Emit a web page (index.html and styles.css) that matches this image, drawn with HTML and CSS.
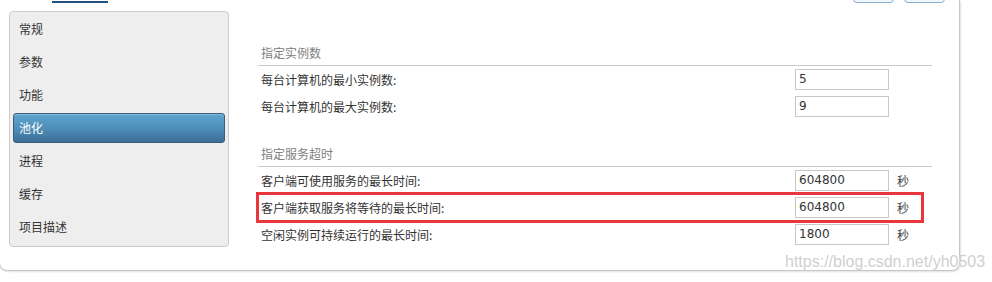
FILE: index.html
```html
<!DOCTYPE html>
<html lang="zh-CN">
<head>
<meta charset="utf-8">
<title>池化</title>
<link rel="stylesheet" href="styles.css">
</head>
<body>
<div class="window">
  <div class="topbar">
    <div class="title"><span class="title-text">服务</span><a class="title-link">服务器名</a></div>
    <div class="buttons">
      <span class="btn">确定</span>
      <span class="btn">取消</span>
    </div>
  </div>
  <div class="main">
    <ul class="sidebar">
      <li class="nav-item">常规</li>
      <li class="nav-item">参数</li>
      <li class="nav-item">功能</li>
      <li class="nav-item active">池化</li>
      <li class="nav-item">进程</li>
      <li class="nav-item">缓存</li>
      <li class="nav-item">项目描述</li>
    </ul>
    <div class="content">
      <div class="section">
        <div class="section-title">指定实例数</div>
        <div class="row"><span class="label">每台计算机的最小实例数:</span><span class="field">5</span><span class="unit"></span></div>
        <div class="row"><span class="label">每台计算机的最大实例数:</span><span class="field">9</span><span class="unit"></span></div>
      </div>
      <div class="section second">
        <div class="section-title">指定服务超时</div>
        <div class="row"><span class="label">客户端可使用服务的最长时间:</span><span class="field">604800</span><span class="unit">秒</span></div>
        <div class="row highlighted"><span class="label">客户端获取服务将等待的最长时间:</span><span class="field">604800</span><span class="unit">秒</span><span class="mark"></span></div>
        <div class="row"><span class="label">空闲实例可持续运行的最长时间:</span><span class="field">1800</span><span class="unit">秒</span></div>
      </div>
    </div>
  </div>
</div>
<div class="watermark">https://blog.csdn.net/yh0503</div>
</body>
</html>
```

FILE: styles.css
```css
html, body {
  margin: 0;
  padding: 0;
  background: #ffffff;
}
body {
  width: 992px;
  height: 282px;
  overflow: hidden;
  position: relative;
  font-family: "Noto Sans CJK SC", "Liberation Sans", sans-serif;
  font-size: 12px;
  color: #333333;
}
.window {
  margin-left: -1px;
  width: 961px;
  height: 271px;
  box-sizing: border-box;
  border: 1px solid #c6c6c6;
  border-top: none;
  border-radius: 0 0 8px 8px;
  box-shadow: 1px 1px 2px rgba(0, 0, 0, 0.12);
  background: #ffffff;
}
.topbar {
  height: 11px;
  display: flex;
  justify-content: space-between;
  align-items: flex-start;
  overflow: hidden;
}
.title {
  margin-top: -19px;
  margin-left: 13px;
  font-size: 14px;
  line-height: 20px;
  color: #555;
  display: flex;
  gap: 11px;
}
.title-link {
  color: #1d4f80;
  border-bottom: 2px solid #1d4f80;
}
.buttons {
  display: flex;
  gap: 10px;
  margin-right: 14px;
  margin-top: -21px;
}
.btn {
  display: block;
  width: 41px;
  height: 24px;
  box-sizing: border-box;
  border: 1px solid #86aed6;
  border-radius: 4px;
  background: #f4f8fc;
  color: transparent;
  font-size: 11px;
}
.main {
  display: flex;
  align-items: flex-start;
}
.sidebar {
  list-style: none;
  margin: 0 0 0 9px;
  padding: 2px 3px 0 3px;
  width: 220px;
  height: 236px;
  box-sizing: border-box;
  border: 1px solid #cccccc;
  border-radius: 4px;
  background: #eeeeee;
  display: flex;
  flex-direction: column;
  gap: 3px;
}
.nav-item {
  height: 30px;
  flex: none;
  padding-left: 6px;
  line-height: 30px;
  box-sizing: border-box;
  color: #333333;
  font-size: 12px;
}
.nav-item.active {
  color: #ffffff;
  border: 1px solid #3d5f7c;
  border-radius: 3px;
  line-height: 28px;
  padding-left: 5px;
  background: linear-gradient(to bottom, #60a5cf 0%, #4f8fb9 50%, #3c6f95 100%);
  box-shadow: inset 0 1px 0 rgba(255, 255, 255, 0.25);
}
.content {
  margin-left: 29px;
  width: 674px;
  padding-top: 33px;
}
.section.second {
  margin-top: 25px;
}
.section-title {
  height: 18px;
  line-height: 18px;
  padding: 0 0 3px 3px;
  border-bottom: 1px solid #cccccc;
  color: #808080;
  font-size: 12px;
}
.row {
  position: relative;
  display: grid;
  grid-template-columns: 537px 94px auto;
  align-items: center;
  height: 27px;
  padding-bottom: 1px;
  box-sizing: border-box;
}
.label {
  padding-left: 3px;
  color: #333333;
}
.field {
  display: block;
  height: 21px;
  box-sizing: border-box;
  border: 1px solid #c8c8c8;
  padding-left: 3px;
  line-height: 19px;
  font-family: "DejaVu Sans", "Liberation Sans", sans-serif;
  font-size: 12px;
  color: #333333;
  background: #ffffff;
}
.unit {
  padding-left: 8px;
  color: #444444;
}
.mark {
  position: absolute;
  left: -2px;
  right: 8px;
  top: -2px;
  bottom: -2px;
  border: 3px solid #e8373d;
  pointer-events: none;
}
.watermark {
  position: absolute;
  left: 785px;
  top: 252px;
  font-family: "Liberation Sans", Arial, sans-serif;
  font-size: 16px;
  line-height: 20px;
  color: rgba(190, 190, 190, 0.75);
  text-shadow: 0 0 1px #ffffff;
}
```
